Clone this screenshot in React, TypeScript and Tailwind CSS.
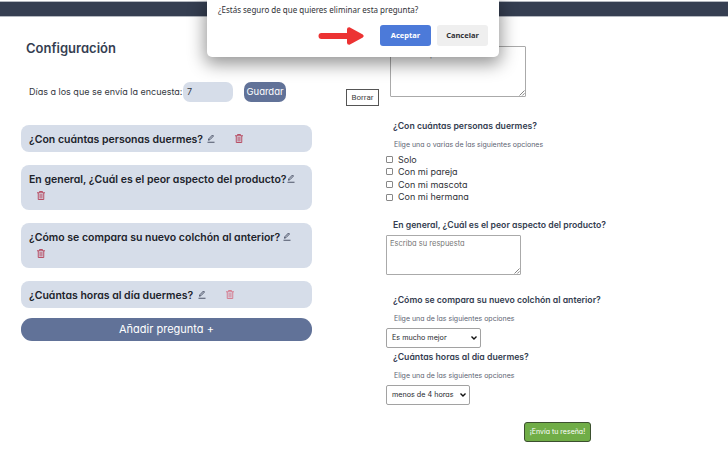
import type { ReactNode } from "react";

function Pencil() {
  return (
    <svg viewBox="0 0 16 18" className="h-[9px] w-2 shrink-0" fill="none" stroke="#343b50" strokeWidth="1.7">
      <path d="M1 16.5h14" />
      <path d="M3 12.5l.7-3L11 2l2 2-7.300 7.500z" />
    </svg>
  );
}

function Trash({ light = false }: { light?: boolean }) {
  return (
    <svg viewBox="0 0 16 18" className={`h-[9px] w-2 shrink-0 ${light ? "text-[#d5798d]" : "text-[#b6475e]"}`} fill="none" stroke="currentColor" strokeWidth="1.9">
      <path d="M0 3.500h16M5 3V1h6v2M2.500 4v13h11V4M6.200 6v9M9.800 6v9" />
    </svg>
  );
}

function Question({ text, width, wrap = false, light = false }: { text: string; width: string; wrap?: boolean; light?: boolean }) {
  return (
    <div className={`rounded-[8px] bg-[#d6dde9] pl-2 ${wrap ? "h-[45px] pt-2" : "h-[27px] pt-2"}`}>
      <div className="flex h-[14px] items-center text-[10.5px] font-semibold text-[#20232b]">
        <span className={`${width} shrink-0 whitespace-nowrap`}>{text}</span>
        <span className="mb-[3px] ml-2 flex"><Pencil /></span>
        {!wrap && <span className="mb-[3px] ml-5 flex"><Trash light={light} /></span>}
      </div>
      {wrap && <div className="ml-2 mt-[4px]"><Trash /></div>}
    </div>
  );
}

function Title({ children, className }: { children: ReactNode; className: string }) {
  return <h3 className={`ml-[7px] h-3 whitespace-nowrap text-[8.700px] font-semibold leading-3 text-[#353e51] ${className}`}>{children}</h3>;
}

function Hint({ children, className = "" }: { children: ReactNode; className?: string }) {
  return <p className={`ml-2 h-[10px] whitespace-nowrap text-[7px] leading-[10px] text-[#5d6472] ${className}`}>{children}</p>;
}

function Grip() {
  return (
    <svg viewBox="0 0 6 6" className="h-[6px] w-[6px]" stroke="#666" strokeWidth="0.8">
      <path d="M0.500 5.500l5-5M3.300 5.500l2.200-2.200" />
    </svg>
  );
}

function Select({ text, className }: { text: string; className: string }) {
  return (
    <div className={`flex h-[20px] items-center justify-between rounded-[2px] border border-[#a2a2a2] pl-[5px] pr-[3px] text-[7.200px] text-[#26282d] ${className}`}>
      <span className="whitespace-nowrap">{text}</span>
      <svg viewBox="0 0 6 4" className="h-1 w-[6px]" fill="none" stroke="#111" strokeWidth="1.400"><path d="M.5.5L3 3 5.500.5" /></svg>
    </div>
  );
}

function Dialog() {
  return (
    <div className="absolute left-[207px] top-0 h-[57px] w-[292px] rounded-b-[5px] bg-white shadow-[0_5px_17px_2px_rgba(0,0,0,0.42)] [font-family:'Noto_Sans',sans-serif]">
      <p className="ml-[11px] mt-1 h-3 whitespace-nowrap text-[8px] leading-3 text-[#303136]">¿Estás seguro de que quieres eliminar esta pregunta?</p>
      <div className="mt-[9px] flex items-center pl-[111px] text-[7.500px] font-bold">
        <svg viewBox="0 0 46 18" className="h-[18px] w-[46px]" fill="#ec3333">
          <path d="M3.500 6H29V2.200Q29 0 31.500.2L44.800 7.500Q46.500 9 44.800 10.500L31.500 17.800Q29 18 29 15.800V12H3.500A3 3 0 0 1 3.500 6Z" />
        </svg>
        <button className="ml-4 h-[21px] w-[51px] rounded-[3px] bg-[#4c7ad9] text-white">Aceptar</button>
        <button className="ml-[6px] h-[21px] w-[51px] rounded-[3px] bg-[#efefef] text-[#303136]">Cancelar</button>
      </div>
    </div>
  );
}

const answers = ["Solo", "Con mi pareja", "Con mi mascota", "Con mi hermana"];

export default function App() {
  return (
    <div className="relative h-[450px] w-[728px] overflow-hidden bg-white [font-family:Inter,sans-serif] [font-feature-settings:'cv11']">
      <header className="mt-px h-4 border-y border-[#b4b8c0] bg-[#353e51]" />
      <main className="flex">
        <section className="ml-[21px] w-[291px]">
          <h1 className="ml-[5px] mt-[22px] h-[18px] text-[13px] font-semibold leading-[18px] text-[#353e51]">Configuración</h1>
          <div className="ml-2 mt-[25px] flex h-[20px] items-center text-[9px] text-[#343841]">
            <span className="w-[154px] whitespace-nowrap">Días a los que se envía la encuesta:</span>
            <span className="flex h-[20px] w-[50px] items-center rounded-[7px] bg-[#d6dde9] pl-1">7</span>
            <button className="ml-[11px] h-[20px] w-[42px] rounded-[7px] bg-[#617298] text-[9.500px] text-white">Guardar</button>
          </div>
          <div className="mt-[23px] flex flex-col gap-[13px]">
            <Question text="¿Con cuántas personas duermes?" width="w-[170px]" />
            <Question text="En general, ¿Cuál es el peor aspecto del producto?" width="w-[250px]" wrap />
            <Question text="¿Cómo se compara su nuevo colchón al anterior?" width="w-[246px]" wrap />
            <Question text="¿Cuántas horas al día duermes?" width="w-[161px]" light />
          </div>
          <button className="mt-[10px] block h-[23px] w-full rounded-[11px] bg-[#617298] text-[11px] text-white">Añadir pregunta +</button>
        </section>
        <button className="ml-[34px] mt-[72px] h-[17px] w-[33px] border border-[#555] text-[8px] text-[#444] [font-family:Roboto,sans-serif]">Borrar</button>
        <section className="ml-[7px] w-[260px]">
          <div className="ml-1 mt-[29px] flex h-[51px] w-[136px] items-end justify-between rounded-[1px] border border-[#aaa]">
            <span className="self-start pl-[3px] pt-[3px] text-[7.500px] leading-[10px] text-[#777]">Escribe aquí tu reseña</span><Grip />
          </div>
          <Title className="mt-[23px]">¿Con cuántas personas duermes?</Title>
          <Hint className="mt-[8px]">Elige una o varias de las siguientes opciones</Hint>
          <div className="mt-[3px]">
            {answers.map((answer) => (
              <label key={answer} className="flex h-[12.600px] items-center text-[9px] text-[#303238]">
                <span className="mr-[5px] h-[7px] w-[7px] rounded-[1px] border border-[#888]" />{answer}
              </label>
            ))}
          </div>
          <Title className="mt-4">En general, ¿Cuál es el peor aspecto del producto?</Title>
          <div className="mt-[4px] flex h-[40px] w-[135px] items-end justify-between rounded-[1px] border border-[#aaa]">
            <span className="self-start pl-[3px] pt-[3px] text-[7.500px] leading-[10px] text-[#777]">Escriba su respuesta</span><Grip />
          </div>
          <Title className="mt-[19px]">¿Cómo se compara su nuevo colchón al anterior?</Title>
          <Hint className="mt-[8px]">Elige una de las siguientes opciones</Hint>
          <Select text="Es mucho mejor" className="mt-1 w-[95px]" />
          <Title className="mt-[3px]">¿Cuántas horas al día duermes?</Title>
          <Hint className="mt-[8px]">Elige una de las siguientes opciones</Hint>
          <Select text="menos de 4 horas" className="mt-1 w-[84px]" />
          <button className="ml-[138px] mt-[17px] h-[20px] w-[67px] whitespace-nowrap rounded-[3px] border border-[#3c502f] bg-[#70ad47] text-[7px] text-white">¡Envía tu reseña!</button>
        </section>
      </main>
      <Dialog />
    </div>
  );
}
